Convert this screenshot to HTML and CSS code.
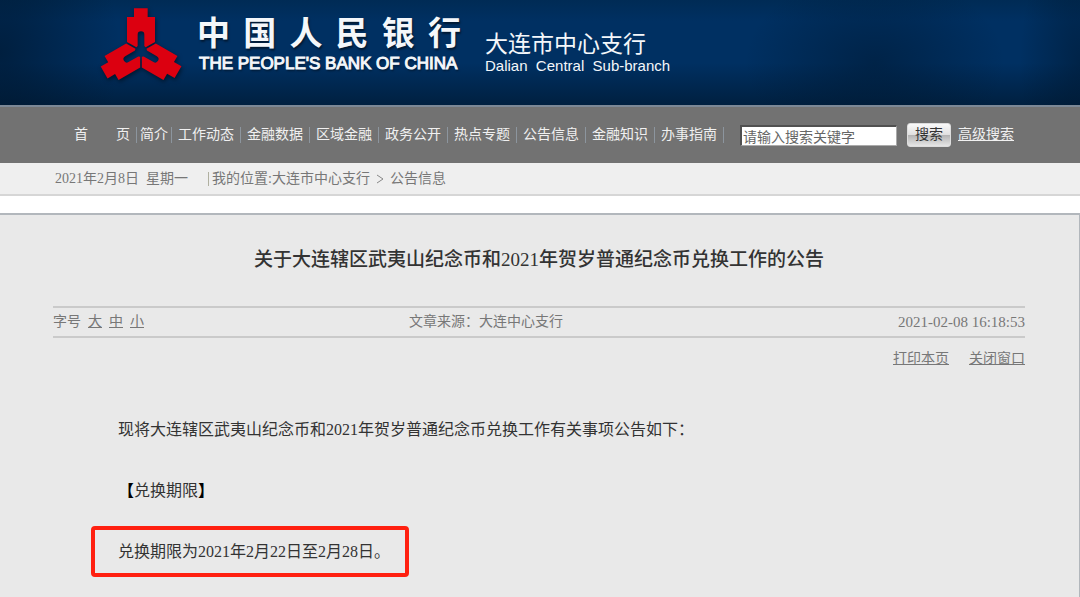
FILE: index.html
```
<!DOCTYPE html>
<html lang="zh-CN">
<head>
<meta charset="utf-8">
<title>关于大连辖区武夷山纪念币和2021年贺岁普通纪念币兑换工作的公告</title>
<link rel="stylesheet" href="styles.css">
</head>
<body>
<div class="header">
	<svg class="logo" viewBox="-126 -132 252 222" aria-hidden="true">
		<defs>
			<path id="arm" d="M-21-128H20V-102H42V-27L14-11L10-15V-49A10 10 0 0 0-10-49V-15L-14-11L-42-27V-102H-21Z"/>
		</defs>
		<use href="#arm"/>
		<use href="#arm" transform="rotate(120)"/>
		<use href="#arm" transform="rotate(240)"/>
	</svg>
	<div class="bank">
		<div class="bank-cn"><span>中</span><span>国</span><span>人</span><span>民</span><span>银</span><span>行</span></div>
		<div class="bank-en">THE PEOPLE'S BANK OF CHINA</div>
	</div>
	<div class="branch">
		<div class="branch-cn">大连市中心支行</div>
		<div class="branch-en">Dalian&nbsp; Central&nbsp; Sub-branch</div>
	</div>
</div>
<div class="nav">
	<ul class="menu">
		<li><a href="#">首　　页</a></li>
		<li class="short"><a href="#">简介</a></li>
		<li><a href="#">工作动态</a></li>
		<li><a href="#">金融数据</a></li>
		<li><a href="#">区域金融</a></li>
		<li><a href="#">政务公开</a></li>
		<li><a href="#">热点专题</a></li>
		<li><a href="#">公告信息</a></li>
		<li><a href="#">金融知识</a></li>
		<li><a href="#">办事指南</a></li>
	</ul>
	<form class="search">
		<input type="text" class="keyword" value="请输入搜索关键字" aria-label="搜索关键字">
		<button type="button" class="btn">搜索</button>
		<a href="#">高级搜索</a>
	</form>
</div>
<div class="crumbs">
	<span class="date">2021年2月8日&nbsp; 星期一</span>
	<span class="place">我的位置:<a href="#">大连市中心支行</a></span>
	<svg class="arrow" viewBox="0 0 8 10" aria-hidden="true"><path d="M1 1L7 5L1 9"/></svg>
	<a href="#">公告信息</a>
</div>
<div class="content">
	<h1>关于大连辖区武夷山纪念币和2021年贺岁普通纪念币兑换工作的公告</h1>
	<div class="info">
		<div class="size"><span>字号</span><a href="#">大</a><a href="#">中</a><a href="#">小</a></div>
		<div class="source">文章来源：大连中心支行</div>
		<div class="time">2021-02-08 16:18:53</div>
	</div>
	<div class="tools">
		<a href="#">打印本页</a>
		<a href="#">关闭窗口</a>
	</div>
	<div class="article">
		<p>现将大连辖区武夷山纪念币和2021年贺岁普通纪念币兑换工作有关事项公告如下：</p>
		<p><b>【</b>兑换期限<b>】</b></p>
		<p class="marked">兑换期限为2021年2月22日至2月28日。</p>
	</div>
</div>
</body>
</html>
```

FILE: styles.css
```
* {
    box-sizing: border-box;
}
html {
    height: 100%;
}
body {
    margin: 0;
    min-height: 100%;
    display: flex;
    flex-direction: column;
    background: #fff;
    color: #777;
    font: 14px/20px "Liberation Serif", "Noto Sans CJK SC", serif;
}
a {
    color: inherit;
}
/* Blue banner */
.header {
    display: flex;
    align-items: flex-start;
    height: 105px;
    padding: 7px 0 0 99px;
    color: #f4f7fa;
    background:
        radial-gradient(ellipse 130px 90px at 81% 60%, rgba(0,20,40,0.45), transparent),
        radial-gradient(ellipse 120px 160px at 0 50%, rgba(0,20,40,0.6), transparent),
        radial-gradient(ellipse 60px 140px at 100% 60%, rgba(0,20,40,0.45), transparent),
        linear-gradient(#002b55, #003062 20%, #003062 60%, #002040);
}
.logo {
    width: 84px;
    height: 74px;
    fill: #dc0010;
    filter: drop-shadow(1px 2px 2px rgba(0,0,0,0.5));
}
.bank {
    width: 264px;
    margin: 8px 0 0 14px;
    font-family: "Liberation Sans", "Noto Sans CJK SC", sans-serif;
    text-shadow: 1px 2px 2px rgba(0,0,0,0.5);
}
.bank-cn {
    display: flex;
    justify-content: space-between;
    font-size: 33px;
    line-height: 38px;
    font-weight: bold;
}
.bank-en {
    padding: 0 2px;
    font-size: 17px;
    line-height: 22px;
    white-space: nowrap;
    -webkit-text-stroke: 1px;
}
.branch {
    margin: 25px 0 0 24px;
    font-family: "Liberation Sans", "Noto Sans CJK SC", sans-serif;
}
.branch-cn {
    font-size: 23px;
    line-height: 24px;
}
.branch-en {
    font-size: 15px;
    line-height: 20px;
}
/* Grey menu bar */
.nav {
    display: flex;
    align-items: center;
    height: 58px;
    padding-left: 68px;
    border-top: 2px solid #7c8896;
    background: #727272;
    color: #f0f0f0;
}
.menu {
    display: flex;
    margin: 0;
    padding: 0;
    list-style: none;
    white-space: nowrap;
}
.menu li {
    padding: 0 6px;
    line-height: 16px;
    border-right: 1px solid #8c959e;
}
.menu .short {
    padding: 0 3px;
}
.menu a {
    text-decoration: none;
}
.search {
    display: flex;
    align-items: center;
    margin-left: 16px;
    white-space: nowrap;
}
.keyword {
    width: 157px;
    height: 21px;
    padding: 0 1px;
    border: 2px solid #505050;
    border-right: 1px solid #aaa;
    border-bottom: 1px solid #aaa;
    background: #fff;
    color: #666;
    font: inherit;
}
.btn {
    width: 44px;
    height: 24px;
    margin: 0 7px 0 10px;
    padding: 0;
    border: 1px solid #ddd;
    border-radius: 3px;
    background: linear-gradient(#fafafa, #e0e0e0 48%, #b4b4b4 52%, #e6e6e6);
    color: #333;
    font: inherit;
    -webkit-text-stroke: 0;
}
/* Date and position */
.crumbs {
    display: flex;
    align-items: center;
    height: 33px;
    padding-left: 55px;
    border-bottom: 2px solid #d6d6d6;
    background: #efefef;
}
.crumbs a {
    text-decoration: none;
}
.place {
    margin-left: 20px;
    padding-left: 3px;
    line-height: 14px;
    border-left: 1px solid #b0b0a0;
}
.arrow {
    width: 8px;
    height: 10px;
    margin: 0 6px;
    fill: none;
    stroke: #888;
}
/* Announcement */
.content {
    flex: 1;
    margin-top: 17px;
    padding: 32px 54px 20px 53px;
    border-top: 2px solid #b2b7bc;
    border-right: 1px solid #b2b7bc;
    background: #e9e9e9;
}
h1 {
    margin: 0 0 34px;
    color: #333;
    font-size: 19px;
    line-height: 25px;
    font-weight: 500;
    text-align: center;
}
.info {
    display: grid;
    grid-template-columns: 1fr auto 1fr;
    align-items: center;
    height: 32px;
    border-top: 2px solid #cacaca;
    border-bottom: 2px solid #cacaca;
}
.size {
    display: flex;
    gap: 7px;
}
.source {
    padding-right: 106px;
}
.time {
    font-size: 15px;
    text-align: right;
}
.tools {
    display: flex;
    justify-content: flex-end;
    gap: 20px;
    margin-top: 11px;
}
.article {
    padding: 45px 0 0 65px;
    color: #333;
    font-size: 16px;
    line-height: 31px;
}
.article p {
    margin: 0 0 30px;
}
.article b {
    color: #000;
}
/* Redemption period in a red frame */
.article .marked {
    width: fit-content;
    margin: -10px 0 0 -27px;
    padding: 6px 15px 6px 23px;
    border: 4px solid #ff2010;
    border-radius: 4px;
}
```
